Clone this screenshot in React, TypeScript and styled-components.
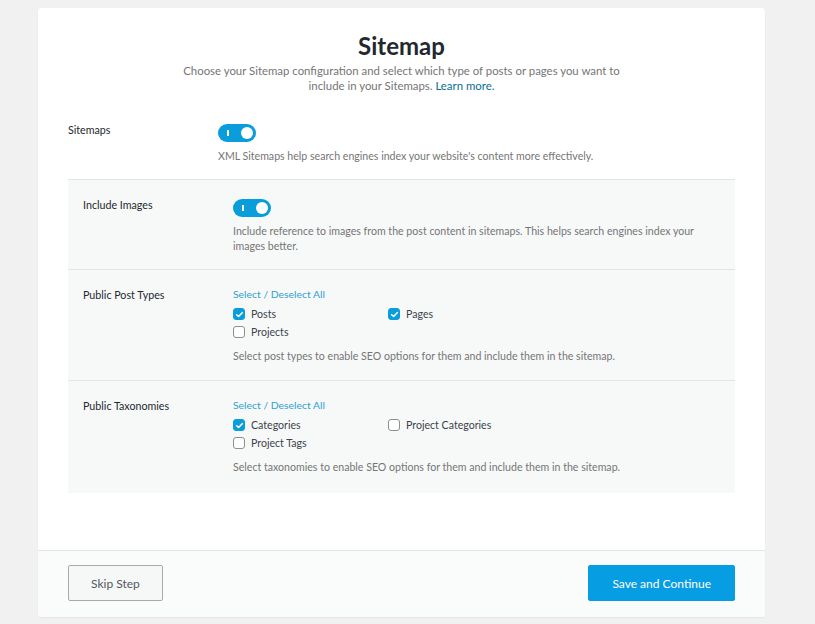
import React from "react";
import styled, { createGlobalStyle } from "styled-components";

const GlobalStyle = createGlobalStyle`
  html, body {
    margin: 0;
    padding: 0;
    background: #f1f1f1;
    font-family: "Lato", "Open Sans", sans-serif;
  }
`;

const Page = styled.div`
  padding: 8px 0 7px 38px;
`;

const Card = styled.div`
  width: 727px;
  background: #fff;
  border-radius: 3px;
  box-shadow: 0 1px 2px rgba(0, 0, 0, 0.06);
  display: flex;
  flex-direction: column;
`;

const Body = styled.div`
  padding: 23px 30px 57px;
`;

const Header = styled.div`
  display: flex;
  flex-direction: column;
  align-items: center;
  text-align: center;
  margin-bottom: 30px;
`;

const Title = styled.h1`
  margin: 0 0 3px;
  font-size: 24px;
  font-weight: 700;
  color: #23282d;
`;

const Lead = styled.p`
  margin: 0;
  width: 450px;
  font-size: 11.4px;
  line-height: 15px;
  color: #757575;
`;

const Link = styled.a`
  color: #0b6d95;
  text-decoration: none;
`;

const Row = styled.div<{ $shaded?: boolean; $last?: boolean; $pb: number }>`
  display: flex;
  padding: ${(p) => (p.$shaded ? "18px 15px" : "0")};
  padding-bottom: ${(p) => p.$pb}px;
  background: ${(p) => (p.$shaded ? "#f7f9f9" : "transparent")};
  border-bottom: ${(p) => (p.$last ? "none" : "1px solid #e2e4e7")};
`;

const Label = styled.div`
  width: 150px;
  flex-shrink: 0;
  font-size: 10.7px;
  color: #23282d;
`;

const Control = styled.div`
  flex: 1;
  display: flex;
  flex-direction: column;
`;

const Help = styled.p<{ $gap?: number }>`
  margin: ${(p) => p.$gap ?? 7}px 0 0;
  font-size: 10.6px;
  line-height: 15px;
  color: #757575;
`;

const Toggle = styled.span`
  position: relative;
  display: inline-block;
  width: 38px;
  height: 18px;
  margin-top: 1px;
  border-radius: 9px;
  background: #0a9ddb;

  &::before {
    content: "";
    position: absolute;
    left: 9px;
    top: 6px;
    width: 2px;
    height: 6px;
    background: #fff;
  }

  &::after {
    content: "";
    position: absolute;
    right: 3px;
    top: 3px;
    width: 12px;
    height: 12px;
    border-radius: 50%;
    background: #fff;
  }
`;

const SelectAll = styled.a`
  font-size: 10.4px;
  color: #2f9fd0;
  text-decoration: none;
  margin-bottom: 7px;
`;

const Options = styled.div`
  display: grid;
  grid-template-columns: 155px 155px;
  row-gap: 4px;
`;

const Option = styled.label`
  display: flex;
  align-items: center;
  gap: 6px;
  font-size: 10.6px;
  color: #3c434a;
  line-height: 14px;
`;

const Box = styled.span<{ $checked?: boolean }>`
  box-sizing: border-box;
  display: inline-flex;
  align-items: center;
  justify-content: center;
  width: 12px;
  height: 12px;
  border-radius: 3px;
  background: ${(p) => (p.$checked ? "#0a9ddb" : "#fff")};
  border: 1px solid ${(p) => (p.$checked ? "#0a9ddb" : "#8c8f94")};
`;

const Footer = styled.div`
  display: flex;
  justify-content: space-between;
  align-items: center;
  padding: 14px 30px 16px;
  background: #fafbfb;
  border-top: 1px solid #e2e4e7;
  border-radius: 0 0 3px 3px;
`;

const Button = styled.button<{ $primary?: boolean }>`
  height: 36px;
  padding: 0 ${(p) => (p.$primary ? "23px" : "22px")};
  border-radius: 2px;
  font-family: inherit;
  font-size: 12px;
  cursor: pointer;
  background: ${(p) => (p.$primary ? "#069de3" : "#f6f7f7")};
  color: ${(p) => (p.$primary ? "#fff" : "#50575e")};
  border: 1px solid ${(p) => (p.$primary ? "#069de3" : "#a7aaad")};
`;

function Check({ checked, label }: { checked?: boolean; label: string }) {
  return (
    <Option>
      <Box $checked={checked}>
        {checked && (
          <svg width="9" height="9" viewBox="0 0 10 10">
            <path
              d="M1.8 5.2 L4 7.3 L8.3 2.7"
              fill="none"
              stroke="#fff"
              strokeWidth="1.6"
              strokeLinecap="round"
              strokeLinejoin="round"
            />
          </svg>
        )}
      </Box>
      {label}
    </Option>
  );
}

export default function App() {
  return (
    <Page>
      <GlobalStyle />
      <Card>
        <Body>
          <Header>
            <Title>Sitemap</Title>
            <Lead>
              Choose your Sitemap configuration and select which type of posts
              or pages you want to include in your Sitemaps.{" "}
              <Link href="#">Learn more.</Link>
            </Lead>
          </Header>

          <Row $pb={15}>
            <Label>Sitemaps</Label>
            <Control>
              <Toggle />
              <Help>
                XML Sitemaps help search engines index your website's content
                more effectively.
              </Help>
            </Control>
          </Row>

          <Row $shaded $pb={15}>
            <Label>Include Images</Label>
            <Control>
              <Toggle />
              <Help>
                Include reference to images from the post content in sitemaps.
                This helps search engines index your images better.
              </Help>
            </Control>
          </Row>

          <Row $shaded $pb={16}>
            <Label>Public Post Types</Label>
            <Control>
              <SelectAll href="#">Select / Deselect All</SelectAll>
              <Options>
                <Check checked label="Posts" />
                <Check checked label="Pages" />
                <Check label="Projects" />
              </Options>
              <Help $gap={10}>
                Select post types to enable SEO options for them and include
                them in the sitemap.
              </Help>
            </Control>
          </Row>

          <Row $shaded $last $pb={18}>
            <Label>Public Taxonomies</Label>
            <Control>
              <SelectAll href="#">Select / Deselect All</SelectAll>
              <Options>
                <Check checked label="Categories" />
                <Check label="Project Categories" />
                <Check label="Project Tags" />
              </Options>
              <Help $gap={10}>
                Select taxonomies to enable SEO options for them and include
                them in the sitemap.
              </Help>
            </Control>
          </Row>
        </Body>
        <Footer>
          <Button>Skip Step</Button>
          <Button $primary>Save and Continue</Button>
        </Footer>
      </Card>
    </Page>
  );
}
